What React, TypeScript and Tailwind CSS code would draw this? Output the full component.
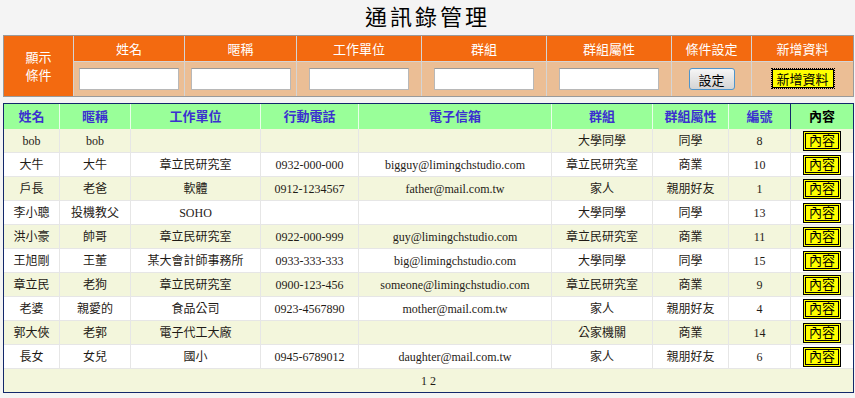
import React from "react";

type Contact = {
  name: string;
  nick: string;
  company: string;
  mobile: string;
  email: string;
  group: string;
  groupType: string;
  id: number;
};

const contacts: Contact[] = [
  { name: "bob", nick: "bob", company: "", mobile: "", email: "", group: "大學同學", groupType: "同學", id: 8 },
  { name: "大牛", nick: "大牛", company: "章立民研究室", mobile: "0932-000-000", email: "bigguy@limingchstudio.com", group: "章立民研究室", groupType: "商業", id: 10 },
  { name: "戶長", nick: "老爸", company: "軟體", mobile: "0912-1234567", email: "father@mail.com.tw", group: "家人", groupType: "親朋好友", id: 1 },
  { name: "李小聰", nick: "投機教父", company: "SOHO", mobile: "", email: "", group: "大學同學", groupType: "同學", id: 13 },
  { name: "洪小豪", nick: "帥哥", company: "章立民研究室", mobile: "0922-000-999", email: "guy@limingchstudio.com", group: "章立民研究室", groupType: "商業", id: 11 },
  { name: "王旭剛", nick: "王董", company: "某大會計師事務所", mobile: "0933-333-333", email: "big@limingchstudio.com", group: "大學同學", groupType: "同學", id: 15 },
  { name: "章立民", nick: "老狗", company: "章立民研究室", mobile: "0900-123-456", email: "someone@limingchstudio.com", group: "章立民研究室", groupType: "商業", id: 9 },
  { name: "老婆", nick: "親愛的", company: "食品公司", mobile: "0923-4567890", email: "mother@mail.com.tw", group: "家人", groupType: "親朋好友", id: 4 },
  { name: "郭大俠", nick: "老郭", company: "電子代工大廠", mobile: "", email: "", group: "公家機關", groupType: "商業", id: 14 },
  { name: "長女", nick: "女兒", company: "國小", mobile: "0945-6789012", email: "daughter@mail.com.tw", group: "家人", groupType: "親朋好友", id: 6 },
];

const filterFields = ["姓名", "暱稱", "工作單位", "群組", "群組屬性"];
const listHeaders = ["姓名", "暱稱", "工作單位", "行動電話", "電子信箱", "群組", "群組屬性", "編號"];

const SANS = "font-['Noto_Sans_CJK_TC',sans-serif]";
const SERIF = "font-['Liberation_Serif','Noto_Sans_CJK_TC',serif]";

function FilterBar() {
  return (
    <div className="ml-[3px] w-[851px] border border-[#9a9a9a]">
      <div
        className={`grid grid-cols-[70px_111px_112px_125px_125px_125px_80px_101px] grid-rows-[26px_34px] text-[13px] leading-[17px] ${SANS}`}
      >
        <div className="row-span-2 flex flex-col items-center justify-center border-r border-[#d4d4d4] bg-[#f36a10] text-white">
          <span className="block h-[18px] leading-[18px]">顯示</span>
          <span className="block h-[18px] leading-[18px]">條件</span>
        </div>
        {[...filterFields, "條件設定", "新增資料"].map((label, i) => (
          <div
            key={label}
            className={`flex items-center justify-center border-b border-[#d4d4d4] bg-[#f36a10] text-white ${
              i < 6 ? "border-r" : ""
            }`}
          >
            {label}
          </div>
        ))}
        {filterFields.map((label) => (
          <div
            key={label}
            className="flex items-center justify-center border-r border-[#d4d4d4] bg-[#ebbe95]"
          >
            <input
              type="text"
              aria-label={label}
              className="h-[22px] w-[100px] border border-[#b8b8b8] border-t-[#9a9a9a] bg-white outline-none"
            />
          </div>
        ))}
        <div className="flex items-center justify-center border-r border-[#d4d4d4] bg-[#ebbe95]">
          <button
            type="button"
            className="h-[22px] w-[46px] rounded-[3px] border border-[#4f95cc] bg-linear-to-b from-[#f6f6f6] to-[#d4d4d4] text-[13px] leading-none text-black"
          >
            設定
          </button>
        </div>
        <div className="flex items-center justify-center bg-[#ebbe95]">
          <button
            type="button"
            className="mb-[2px] h-[19px] w-[62px] border border-black bg-[#ffff00] text-[13px] leading-none text-black outline-1 outline-offset-0 outline-dotted outline-black"
          >
            新增資料
          </button>
        </div>
      </div>
    </div>
  );
}

function ContactTable() {
  const cols = "grid grid-cols-[56px_71px_130px_98px_193px_101px_76px_62px_62px]";
  return (
    <div className={`ml-[3px] mt-[6px] w-[851px] border border-[#12286a] text-[12px] ${SERIF}`}>
      <div className={`${cols} h-[25px] bg-[#99ff99] text-[13px] font-bold`}>
        {listHeaders.map((h, i) => (
          <div
            key={h}
            className={`flex items-center justify-center border-r text-[#3b30d0] ${
              i === 7 ? "border-[#12286a]" : "border-[#e9ffe9]"
            }`}
          >
            {h}
          </div>
        ))}
        <div className="flex items-center justify-center text-black">內容</div>
      </div>

      {contacts.map((c, r) => {
        const cells = [c.name, c.nick, c.company, c.mobile, c.email, c.group, c.groupType, String(c.id)];
        return (
          <div
            key={c.id}
            className={`${cols} h-[24px] border-b border-[#e6e6e6] text-[#1f1b16] ${
              r % 2 === 0 ? "bg-[#f3f6dc]" : "bg-white"
            }`}
          >
            {cells.map((v, i) => (
              <div key={i} className="flex items-center justify-center whitespace-nowrap border-r border-[#e6e6e6]">
                {v}
              </div>
            ))}
            <div className="flex items-center justify-center">
              <button
                type="button"
                className="h-[20px] w-[38px] border-[3px] border-double border-black bg-[#ffff00] text-[13px] leading-none text-black"
              >
                內容
              </button>
            </div>
          </div>
        );
      })}

      <div className="flex h-[23px] items-center justify-center bg-[#f3f6dc] text-[#1f1b16]">
        1 2
      </div>
    </div>
  );
}

export default function App() {
  return (
    <div className="h-[398px] w-[855px] bg-[#f4f4f4]">
      <h1
        className={`flex h-[35px] items-center justify-center text-[22px] tracking-[3px] text-black ${SERIF}`}
      >
        通訊錄管理
      </h1>
      <FilterBar />
      <ContactTable />
    </div>
  );
}
